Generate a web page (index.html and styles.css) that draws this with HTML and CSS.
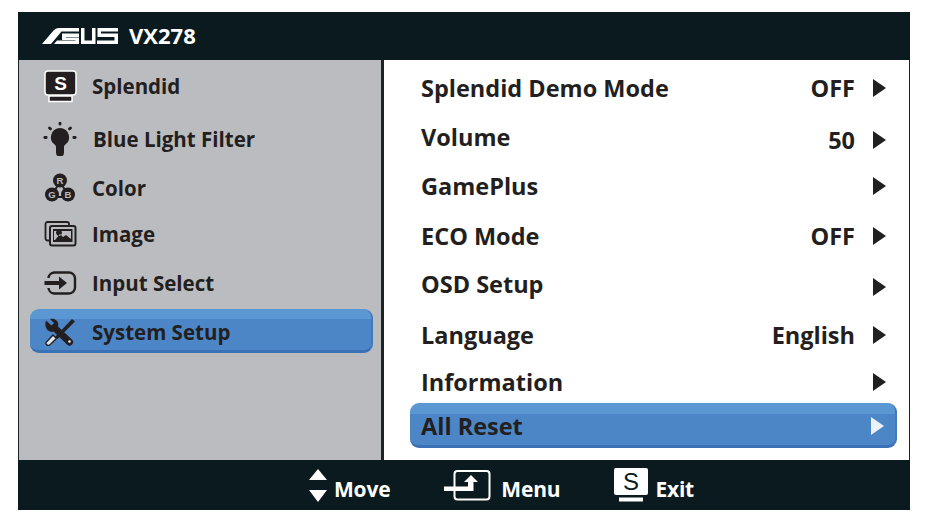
FILE: index.html
```html
<!DOCTYPE html>
<html lang="en">
<head>
<meta charset="utf-8">
<title>ASUS VX278 OSD</title>
<link rel="stylesheet" href="styles.css">
</head>
<body>
<div class="osd">
  <header class="titlebar">
    <svg class="logo" viewBox="0 0 76 16" width="76" height="16">
      <path fill="#fff" d="M0 16 L12 2 Q14 0 17 0 H37 V3.500 H19.500 L9 16Z"/>
      <path fill="#fff" d="M20 5.500 H37 V9 H24 V9.500 H37 V16 H12 L15 12.500 H33.500 V12 H20Z"/>
      <path fill="#fff" d="M39 0 H42.500 V12.500 H50 V0 H53.500 V16 H39Z"/>
      <path fill="#fff" d="M55.500 0 H76 V3.500 H59 V5.500 H76 V16 H55 V12.500 H72.500 V9 H55.500Z"/>
    </svg>
    <span class="model">VX278</span>
  </header>
  <main class="panels">
    <nav class="sidebar">
      <div class="side-row">
        <svg class="ic" width="34" height="33" viewBox="0 0 34 33">
          <rect x="2" y="1" width="31" height="24" rx="3" fill="#231f20" stroke="#fff" stroke-width="1.500"/>
          <rect x="6" y="26" width="23" height="5.500" fill="#231f20" stroke="#fff" stroke-width="1.500"/>
          <text x="17.500" y="20" class="ic-s">S</text>
        </svg>
        <span>Splendid</span>
      </div>
      <div class="side-row shift">
        <svg class="ic" width="34" height="34" viewBox="0 0 34 34">
          <path fill="#231f20" d="M17 6a9.200 9.200 0 0 1 5.400 16.500c-.9.800-1.400 1.700-1.400 2.800v5.200a4 4 0 0 1-8 0v-5.200c0-1.100-.5-2-1.400-2.800A9.200 9.200 0 0 1 17 6Z"/>
          <g stroke="#231f20" stroke-width="2.800" stroke-linecap="round"><path d="M17 1v1.200M6.500 6l1 .9M27.500 6l-1 .9M1.800 15.500h1.400M30.800 15.500h1.400"/></g>
        </svg>
        <span>Blue Light Filter</span>
      </div>
      <div class="side-row">
        <svg class="ic" width="34" height="30" viewBox="0 0 34 30">
          <g fill="none" stroke="#231f20" stroke-width="2"><path d="M17 9 10 20M17 9l7 11M10 24h14"/></g>
          <circle cx="17" cy="7.500" r="7" fill="#231f20"/>
          <circle cx="9" cy="21.500" r="7" fill="#231f20"/>
          <circle cx="25" cy="21.500" r="7" fill="#231f20"/>
          <text x="17" y="11" class="ic-rgb">R</text>
          <text x="9" y="25" class="ic-rgb">G</text>
          <text x="25" y="25" class="ic-rgb">B</text>
        </svg>
        <span>Color</span>
      </div>
      <div class="side-row">
        <svg class="ic" width="34" height="26" viewBox="0 0 34 26">
          <path fill="none" stroke="#231f20" stroke-width="1.800" d="M6 19.500H4.500A2 2 0 0 1 2.500 17.500V3A2 2 0 0 1 4.500 1H24A2 2 0 0 1 26 3V5"/>
          <rect x="7" y="5" width="25.500" height="19.500" rx="2" fill="#bbbcbf" stroke="#231f20" stroke-width="2"/>
          <rect x="10" y="8" width="19.500" height="13" fill="#231f20"/>
          <path fill="#bbbcbf" d="M12 19l5-6 3 3 3-2 5 4v-8h-9.500a3 3 0 1 1-5 0H11V19Z"/>
        </svg>
        <span>Image</span>
      </div>
      <div class="side-row">
        <svg class="ic" width="34" height="24" viewBox="0 0 34 24">
          <path fill="none" stroke="#231f20" stroke-width="2.400" d="M5.500 7V7A6 6 0 0 1 11 1.500H26A6 6 0 0 1 32 7.500V16.500A6 6 0 0 1 26 22.500H11A6 6 0 0 1 5.500 17"/>
          <path fill="#231f20" d="M1.500 10H16V5.500L24 12 16 18.500V14H1.500Z"/>
        </svg>
        <span>Input Select</span>
      </div>
      <div class="side-row side-active">
        <svg class="ic" width="34" height="28" viewBox="0 0 34 28">
          <path fill="#231f20" d="M29 1 32 3.500 14.500 21 12 19Z"/>
          <path fill="#231f20" d="M3 2.500 8.500 7.500 11 5 7 1C12-.5 16.500 3.500 15 8.500L29 21.500A3.500 3.500 0 0 1 24 26.500L10.500 13.500C5.500 15 .5 9.500 3 2.500Z"/>
          <path fill="#dfe4ea" stroke="#231f20" stroke-width="1.400" d="M10 17 13.500 20.500 6.500 27.200C4.500 28 2.500 26.500 3 24.500Z"/>
          <circle cx="26.500" cy="23.500" r="1.300" fill="#dfe4ea"/>
        </svg>
        <span>System Setup</span>
      </div>
    </nav>
    <section class="settings">
      <div class="set-row"><span class="name">Splendid Demo Mode</span><span class="value">OFF</span><i class="arrow"></i></div>
      <div class="set-row set-low"><span class="name">Volume</span><span class="value">50</span><i class="arrow"></i></div>
      <div class="set-row"><span class="name">GamePlus</span><i class="arrow"></i></div>
      <div class="set-row"><span class="name">ECO Mode</span><span class="value">OFF</span><i class="arrow"></i></div>
      <div class="set-row set-low"><span class="name">OSD Setup</span><i class="arrow"></i></div>
      <div class="set-row"><span class="name">Language</span><span class="value">English</span><i class="arrow"></i></div>
      <div class="set-row set-info"><span class="name">Information</span><i class="arrow"></i></div>
      <div class="set-row set-active"><span class="name">All Reset</span><i class="arrow"></i></div>
    </section>
  </main>
  <footer class="footbar">
    <div class="hint hint-move">
      <svg width="18" height="33" viewBox="0 0 18 33"><path fill="#fff" d="M9 0 18 11H0ZM0 21H18L9 33Z"/></svg>
      <span>Move</span>
    </div>
    <div class="hint hint-menu">
      <svg width="47" height="31" viewBox="0 0 47 31">
        <rect x="10.500" y="1" width="35" height="28.500" rx="3" fill="none" stroke="#fff" stroke-width="2"/>
        <path fill="#fff" d="M0 16.500H24V12H20L27 5 34 12H29.500V21H0Z"/>
      </svg>
      <span>Menu</span>
    </div>
    <div class="hint hint-exit">
      <svg width="34" height="34" viewBox="0 0 34 34">
        <rect x="0" y="0" width="34" height="27" rx="2" fill="#fff"/>
        <rect x="5" y="29.500" width="24" height="4" fill="#fff"/>
        <text x="17" y="21.500" class="ic-exit">S</text>
      </svg>
      <span>Exit</span>
    </div>
  </footer>
</div>
</body>
</html>
```
FILE: styles.css
```css
* { box-sizing: border-box; }
html, body { margin: 0; background: #fff; }
body { width: 930px; height: 521px; padding: 12px 20px 11px 18px; font-family: "Open Sans", "Noto Sans", sans-serif; font-weight: 700; overflow: hidden; }
.osd { display: flex; flex-direction: column; height: 498px; width: 892px; }
.titlebar { height: 48px; flex: none; background: #0a1a1f; display: flex; align-items: center; padding-left: 24px; gap: 11px; }
.model { color: #fff; font-size: 22px; letter-spacing: 0; padding-bottom: 2px; }
.panels { flex: 1; display: flex; border-left: 1px solid #1c2226; border-right: 1px solid #1c2226; min-height: 0; }
.sidebar { width: 362px; flex: none; background: #bbbcbf; display: grid; grid-template-rows: 52px 53px 46px 45px 53px 44px; align-content: start; color: #231f20; font-size: 20.500px; letter-spacing: 0; }
.side-row { display: flex; align-items: center; padding-left: 24px; }
.side-row .ic { flex: none; margin-right: 15px; }
.shift .ic { margin-right: 16px; }
.side-active { margin: 0 8px 0 11px; padding-left: 13px; padding-top: 4px; border-radius: 9px; border-bottom: 3px solid #3b71b5; border-right: 2px solid #4479bc; background: linear-gradient(#5b97d3 0 10px, #4d86c6 10px); }
.settings { flex: 1; border-left: 3px solid #1c2226; background: #fff; padding: 4px 12px 0 26px; display: grid; grid-template-rows: 48px 50px 48px 52px 44px 58px 39px 45px; align-content: start; color: #231f20; font-size: 23.500px; letter-spacing: 0; }
.set-row { display: flex; align-items: center; padding: 0 11px 0 11px; }
.set-row .name { flex: 1; }
.set-row .value { margin-right: 18px; }
.set-low .value, .set-low .arrow { margin-top: 6px; }
.set-info { padding-bottom: 3px; }
.arrow { width: 0; height: 0; flex: none; border-left: 13px solid #231f20; border-top: 9px solid transparent; border-bottom: 9px solid transparent; }
.set-active { align-self: stretch; padding-top: 3px; padding-right: 11px; border-radius: 9px; border-bottom: 3px solid #3b71b5; border-right: 2px solid #4479bc; background: linear-gradient(#5b97d3 0 11px, #4d86c6 11px); }
.set-active .arrow { border-left-color: #eaf1f9; }
.footbar { height: 50px; flex: none; background: #0a1a1f; display: flex; align-items: center; padding-left: 291px; color: #fff; font-size: 21px; letter-spacing: -.2px; }
.hint { display: flex; align-items: center; gap: 7px; }
.hint span { padding-top: 7px; }
.hint-menu { margin-left: 54px; gap: 10px; }
.hint-exit { margin-left: 54px; }
.ic-s { font: 700 19px "Liberation Sans", sans-serif; fill: #fff; text-anchor: middle; }
.ic-rgb { font: 700 9.500px "Liberation Sans", sans-serif; fill: #bbbcbf; text-anchor: middle; }
.ic-exit { font: 400 24px "Liberation Sans", sans-serif; fill: #0a1a1f; text-anchor: middle; }
```
